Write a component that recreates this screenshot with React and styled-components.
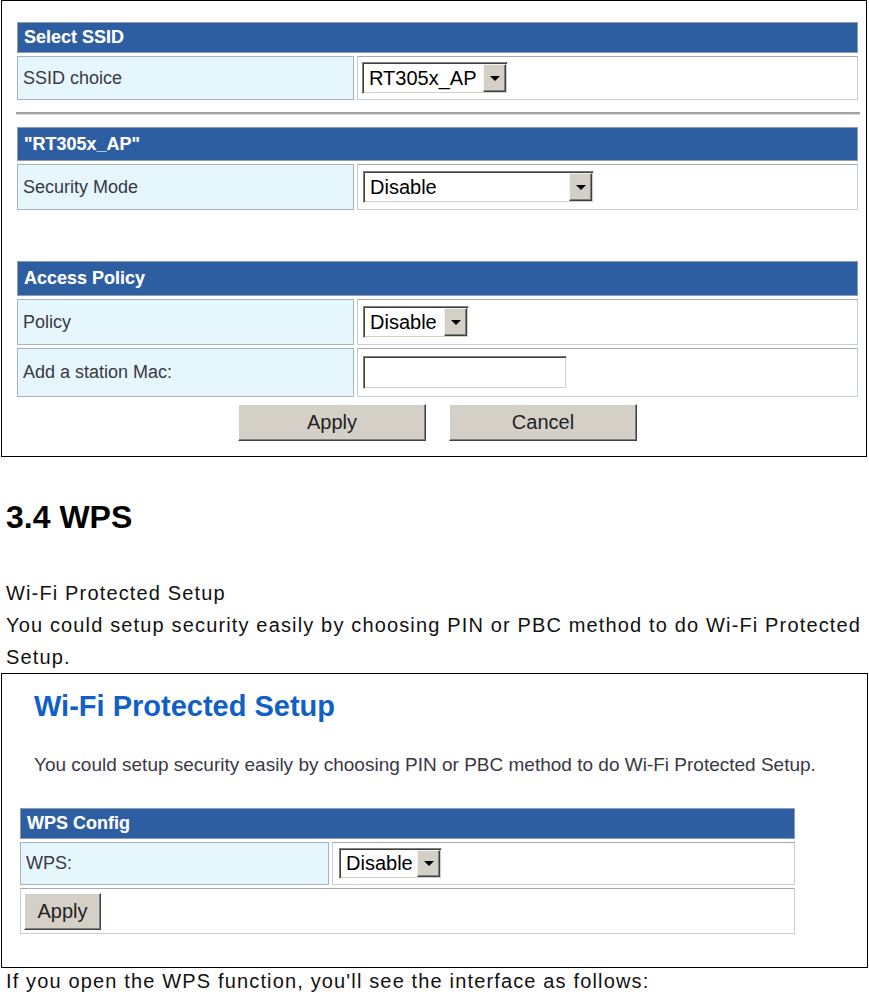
import React from 'react';
import styled, { createGlobalStyle } from 'styled-components';

const GlobalStyle = createGlobalStyle`
  html, body {
    margin: 0;
    padding: 0;
    background: #fff;
  }
  * {
    box-sizing: border-box;
  }
`;

const Page = styled.div`
  width: 869px;
  font-family: "Liberation Sans", Arial, sans-serif;
  color: #111;
`;

const Frame = styled.div`
  margin-left: 1px;
  width: ${(p) => p.$w || 866}px;
  border: 1px solid #000;
  background: #fff;
  padding: ${(p) => p.$pad};
`;

const Table = styled.div`
  display: grid;
  grid-template-columns: ${(p) => p.$left}px 1fr;
  gap: 3px;
  width: ${(p) => (p.$w ? `${p.$w}px` : 'auto')};
`;

const Header = styled.div`
  grid-column: 1 / -1;
  height: ${(p) => p.$h || 31}px;
  background: #2c5ea1;
  border: 1px solid #8e9cad;
  color: #fff;
  font-weight: bold;
  font-size: 18px;
  display: flex;
  align-items: center;
  padding-left: 6px;
  text-shadow: 0 0 1px rgba(255, 255, 255, 0.3);
`;

const LabelCell = styled.div`
  height: ${(p) => p.$h || 45}px;
  background: #e6f6fd;
  border: 1px solid #a6b4c2;
  display: flex;
  align-items: center;
  padding-left: 5px;
  font-size: 18px;
  color: #3a3845;
`;

const ValueCell = styled.div`
  grid-column: ${(p) => (p.$span ? '1 / -1' : 'auto')};
  height: ${(p) => p.$h || 45}px;
  background: #fff;
  border: 1px solid #c6ced8;
  border-top-color: #a8a8a8;
  display: flex;
  align-items: center;
  padding-left: ${(p) => p.$pl ?? 4}px;
`;

const SelectBox = styled.div`
  display: inline-flex;
  width: ${(p) => p.$w}px;
  height: ${(p) => p.$h || 32}px;
  background: #fff;
  border: 1px solid;
  border-color: #808080 #fff #fff #808080;
  box-shadow: inset 1px 1px #404040, inset -1px -1px #d4d0c8;
  padding: 1px;
`;

const SelectText = styled.span`
  flex: 1;
  display: flex;
  align-items: center;
  padding-left: 5px;
  font-size: 20px;
  color: #000;
`;

const Arrow = styled.span`
  width: 23px;
  background: #d4d0c8;
  border: 1px solid;
  border-color: #f4f4f4 #404040 #404040 #f4f4f4;
  box-shadow: inset -1px -1px #808080;
  display: flex;
  align-items: center;
  justify-content: center;

  &::after {
    content: '';
    border-left: 5px solid transparent;
    border-right: 5px solid transparent;
    border-top: 5px solid #000;
  }
`;

const TextInput = styled.div`
  width: ${(p) => p.$w}px;
  height: 33px;
  background: #fff;
  border: 1px solid;
  border-color: #808080 #fff #fff #808080;
  box-shadow: inset 1px 1px #404040, inset -1px -1px #d4d0c8;
`;

const Separator = styled.div`
  margin: 12px -2px 12px -1px;
  border-top: 2px solid #a3a3a3;
  border-bottom: 1px solid #dcdcdc;
`;

const Spacer = styled.div`
  height: ${(p) => p.$h}px;
`;

const ButtonRow = styled.div`
  display: flex;
  justify-content: center;
  gap: 23px;
  margin-top: 7px;
`;

const Button = styled.button`
  width: ${(p) => p.$w}px;
  height: ${(p) => p.$h}px;
  background: #d4d0c8;
  border: 1px solid;
  border-color: #fff #404040 #404040 #fff;
  box-shadow: inset -1px -1px #808080;
  font-family: "Liberation Sans", Arial, sans-serif;
  font-size: 20px;
  color: #222;
  padding: 0;
`;

const SectionTitle = styled.h2`
  margin: 40px 0 0 6px;
  font-size: 32px;
  line-height: 40px;
  font-weight: bold;
  color: #000;
`;

const Para = styled.p`
  margin: ${(p) => p.$m || '0'};
  padding-left: 6px;
  font-size: 20px;
  line-height: ${(p) => p.$lh || 32}px;
  letter-spacing: 1.15px;
  color: #111;
`;

const AppTitle = styled.div`
  margin-left: 14px;
  font-size: 29px;
  line-height: 36px;
  font-weight: bold;
  color: #1060c8;
`;

const AppIntro = styled.div`
  margin: 29px 0 31px 14px;
  font-size: 19px;
  line-height: 24px;
  color: #3a3845;
`;

const Select = ({ value, w, h }) => (
  <SelectBox $w={w} $h={h}>
    <SelectText>{value}</SelectText>
    <Arrow />
  </SelectBox>
);

export default function App() {
  return (
    <Page>
      <GlobalStyle />
      <Frame $pad="21px 8px 15px 15px">
        <Table $left={337}>
          <Header $h={31}>Select SSID</Header>
          <LabelCell $h={44}>SSID choice</LabelCell>
          <ValueCell $h={44}>
            <Select value="RT305x_AP" w={146} />
          </ValueCell>
        </Table>
        <Separator />
        <Table $left={337}>
          <Header $h={34}>"RT305x_AP"</Header>
          <LabelCell $h={46}>Security Mode</LabelCell>
          <ValueCell $h={46} $pl={5}>
            <Select value="Disable" w={231} />
          </ValueCell>
        </Table>
        <Spacer $h={51} />
        <Table $left={337}>
          <Header $h={35}>Access Policy</Header>
          <LabelCell $h={46}>Policy</LabelCell>
          <ValueCell $h={46} $pl={5}>
            <Select value="Disable" w={106} />
          </ValueCell>
          <LabelCell $h={49}>Add a station Mac:</LabelCell>
          <ValueCell $h={49} $pl={5}>
            <TextInput $w={204} />
          </ValueCell>
        </Table>
        <ButtonRow>
          <Button $w={188} $h={37}>Apply</Button>
          <Button $w={188} $h={37}>Cancel</Button>
        </ButtonRow>
      </Frame>

      <SectionTitle>3.4 WPS</SectionTitle>
      <Para $m="40px 0 0 0">
        Wi-Fi Protected Setup
        <br />
        You could setup security easily by choosing PIN or PBC method to do Wi-Fi Protected Setup.
      </Para>

      <Frame $w={867} $pad="14px 8px 33px 18px">
        <AppTitle>Wi-Fi Protected Setup</AppTitle>
        <AppIntro>
          You could setup security easily by choosing PIN or PBC method to do Wi-Fi Protected Setup.
        </AppIntro>
        <Table $left={309} $w={775}>
          <Header $h={31}>WPS Config</Header>
          <LabelCell $h={43}>WPS:</LabelCell>
          <ValueCell $h={43} $pl={6}>
            <Select value="Disable" w={103} h={31} />
          </ValueCell>
          <ValueCell $span $h={46} $pl={3}>
            <Button $w={77} $h={37}>Apply</Button>
          </ValueCell>
        </Table>
      </Frame>
      <Para $lh={26}>If you open the WPS function, you'll see the interface as follows:</Para>
    </Page>
  );
}
